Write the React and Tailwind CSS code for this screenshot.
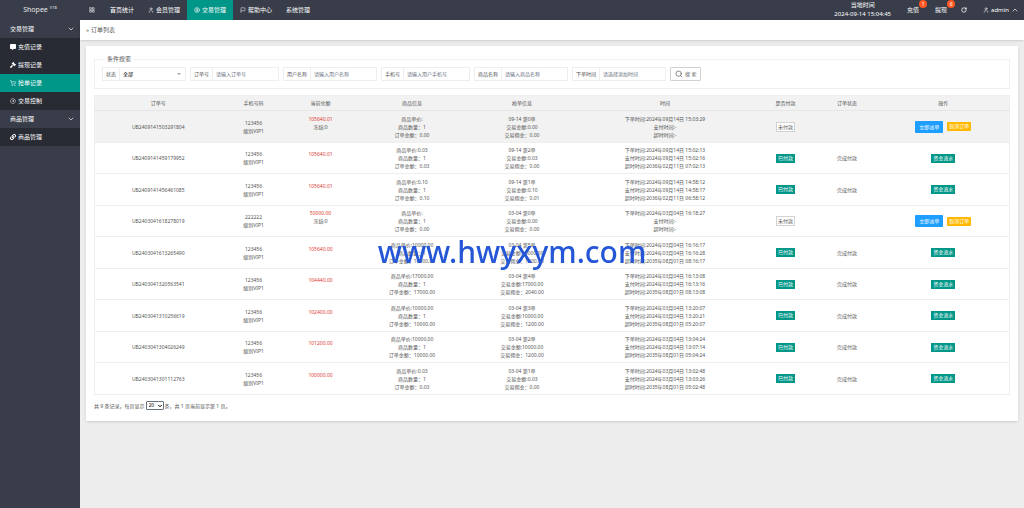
import React, { useState } from "react";
import {
  User,
  Flag,
  CircleDollarSign,
  LayoutGrid,
  ChevronDown,
  ChevronUp,
  RotateCw,
  Search,
  ShoppingCart,
  CircleGauge,
} from "lucide-react";
import { FaGavel, FaLink, FaCommentAlt } from "react-icons/fa";

const menu = [
  {
    title: "交易管理",
    children: [
      { label: "充值记录", icon: FaCommentAlt },
      { label: "提现记录", icon: FaGavel },
      { label: "抢单记录", icon: ShoppingCart, active: true },
      { label: "交易控制", icon: CircleGauge },
    ],
  },
  {
    title: "商品管理",
    children: [{ label: "商品管理", icon: FaLink }],
  },
];

const topNav = [
  { label: "首页统计" },
  { label: "会员管理", icon: User },
  { label: "交易管理", icon: CircleDollarSign, active: true },
  { label: "帮助中心", icon: Flag },
  { label: "系统管理" },
];

const filters = [
  { id: "order", label: "订单号", placeholder: "请输入订单号" },
  { id: "user", label: "用户名称", placeholder: "请输入用户名称" },
  { id: "phone", label: "手机号", placeholder: "请输入用户手机号" },
  { id: "goods", label: "商品名称", placeholder: "请输入商品名称" },
  { id: "time", label: "下单时间", placeholder: "请选择添加时间" },
];

const columns = [
  { title: "订单号", width: "w-[127px]" },
  { title: "手机号码", width: "w-[64px]" },
  { title: "当前余额", width: "w-[70px]" },
  { title: "商品信息", width: "w-[113px]" },
  { title: "抢单信息", width: "w-[107px]" },
  { title: "时间", width: "w-[179px]" },
  { title: "是否付款", width: "w-[62px]" },
  { title: "订单状态", width: "w-[61px]" },
  { title: "操作", width: "w-[132px]" },
];

const orders = [
  { id: "UB2409141503291804", phone: "123456", balance: "105640.01", price: "", total: "0.00", round: "09-14 第0单", amount: "0.00", fee: "0.00", created: "2024年09月14日 15:03:29", paidAt: "-", expires: "-", paid: false },
  { id: "UB2409141459179952", phone: "123456", balance: "105640.01", price: "0.03", total: "0.03", round: "09-14 第2单", amount: "0.03", fee: "0.00", created: "2024年09月14日 15:02:13", paidAt: "2024年09月14日 15:02:16", expires: "2036年02月11日 07:02:13", paid: true },
  { id: "UB2409141456461085", phone: "123456", balance: "105640.01", price: "0.10", total: "0.10", round: "09-14 第1单", amount: "0.10", fee: "0.01", created: "2024年09月14日 14:58:12", paidAt: "2024年09月14日 14:58:17", expires: "2036年02月11日 06:58:12", paid: true },
  { id: "UB2403041618278019", phone: "222222", balance: "50000.00", price: "", total: "0.00", round: "03-04 第0单", amount: "0.00", fee: "0.00", created: "2024年03月04日 16:18:27", paidAt: "-", expires: "-", paid: false },
  { id: "UB2403041613265490", phone: "123456", balance: "105640.00", price: "10000.00", total: "10000.00", round: "03-04 第5单", amount: "10000.00", fee: "1200.00", created: "2024年03月04日 16:16:17", paidAt: "2024年03月04日 16:16:28", expires: "2035年08月01日 08:16:17", paid: true },
  { id: "UB2403041320563541", phone: "123456", balance: "104440.00", price: "17000.00", total: "17000.00", round: "03-04 第4单", amount: "17000.00", fee: "2040.00", created: "2024年03月04日 16:13:08", paidAt: "2024年03月04日 16:13:16", expires: "2035年08月01日 08:13:08", paid: true },
  { id: "UB2403041310256619", phone: "123456", balance: "102400.00", price: "10000.00", total: "10000.00", round: "03-04 第3单", amount: "10000.00", fee: "1200.00", created: "2024年03月04日 13:20:07", paidAt: "2024年03月04日 13:20:21", expires: "2035年08月01日 05:20:07", paid: true },
  { id: "UB2403041304026249", phone: "123456", balance: "101200.00", price: "10000.00", total: "10000.00", round: "03-04 第2单", amount: "10000.00", fee: "1200.00", created: "2024年03月04日 13:04:24", paidAt: "2024年03月04日 13:07:14", expires: "2035年08月01日 05:04:24", paid: true },
  { id: "UB2403041301112763", phone: "123456", balance: "100000.00", price: "0.03", total: "0.03", round: "03-04 第1单", amount: "0.03", fee: "0.00", created: "2024年03月04日 13:02:48", paidAt: "2024年03月04日 13:03:26", expires: "2035年08月01日 05:02:48", paid: true },
];

function Sidebar() {
  return (
    <aside className="w-20 shrink-0 bg-[#393d49] text-white">
      <h1 className="flex h-5 items-center justify-center gap-[2px] text-[7px] text-gray-200">
        Shopee <sup className="text-[4px]">V18</sup>
      </h1>
      <nav>
        {menu.map((group) => (
          <div key={group.title}>
            <button
              type="button"
              className="flex h-[18px] w-full items-center justify-between pl-[10px] pr-[5px]"
            >
              {group.title}
              <ChevronDown className="size-2" />
            </button>
            {group.children.map((item) => (
              <a
                key={item.label}
                href="#"
                className={`flex h-[18px] items-center gap-[2px] pl-[10px] ${
                  item.active ? "bg-[#009688]" : "bg-[#282b33]"
                }`}
              >
                <item.icon className="size-[6px]" />
                {item.label}
              </a>
            ))}
          </div>
        ))}
      </nav>
    </aside>
  );
}

function Counter({ label, count }) {
  return (
    <a href="#" className="relative flex h-5 w-7 items-center justify-center">
      {label}
      <span className="absolute right-0 top-0 flex size-2 items-center justify-center rounded-full bg-[#ff5722] text-[5px]">
        {count}
      </span>
    </a>
  );
}

function Header() {
  return (
    <header className="flex h-5 items-center bg-[#393d49] text-white">
      <button type="button" aria-label="菜单" className="flex h-5 w-[23px] items-center justify-center">
        <LayoutGrid className="size-[6px]" />
      </button>
      <nav className="flex">
        {topNav.map((item) => (
          <a
            key={item.label}
            href="#"
            className={`flex h-5 items-center gap-[2px] px-[7px] ${
              item.active ? "bg-[#009688]" : ""
            }`}
          >
            {item.icon && <item.icon className="size-[6px]" />}
            {item.label}
          </a>
        ))}
      </nav>
      <div className="ml-auto flex items-center">
        <div className="mr-2 text-center leading-[9px]">
          <p>当地时间</p>
          <p>2024-09-14 15:04:45</p>
        </div>
        <Counter label="充值" count="1" />
        <Counter label="提现" count="6" />
        <button type="button" aria-label="刷新" className="flex h-5 w-[18px] items-center justify-center">
          <RotateCw className="size-[6px]" strokeWidth={3} />
        </button>
        <button type="button" className="flex h-5 items-center gap-[2px] pl-[10px] pr-[5px]">
          <User className="size-[6px]" />
          admin
          <ChevronUp className="size-2" />
        </button>
      </div>
    </header>
  );
}

function SearchForm() {
  const [status, setStatus] = useState("all");

  return (
    <form onSubmit={(e) => e.preventDefault()}>
      <fieldset className="border border-[#f0f0f0] px-[7px] pb-[7px] pt-[3px]">
        <legend className="ml-[3px] px-[2px] text-[6px] leading-[10px]">条件搜索</legend>
        <div className="flex flex-wrap gap-1 text-[5px]">
          <div className="relative flex h-[14px] border border-[#eeeeee]">
            <label htmlFor="status" className="flex items-center border-r border-[#eeeeee] px-[3px]">
              状态
            </label>
            <select
              id="status"
              className="w-[65px] appearance-none bg-white px-[3px] text-black outline-none"
              value={status}
              onChange={(e) => setStatus(e.target.value)}
            >
              <option value="all">全部</option>
              <option value="paid">已付款</option>
              <option value="unpaid">未付款</option>
            </select>
            <span className="pointer-events-none absolute right-1 top-[5px] border-x-2 border-t-2 border-x-transparent border-t-gray-400" />
          </div>
          {filters.map((f) => (
            <div key={f.id} className="flex h-[14px] border border-[#eeeeee]">
              <label htmlFor={f.id} className="flex items-center border-r border-[#eeeeee] px-[3px]">
                {f.label}
              </label>
              <input
                id={f.id}
                type="text"
                placeholder={f.placeholder}
                className="w-[65px] px-[3px] outline-none placeholder:text-gray-500"
              />
            </div>
          ))}
          <button
            type="submit"
            className="flex h-[14px] items-center gap-[2px] rounded-[1px] border border-[#d2d2d2] px-1"
          >
            <Search className="size-2" strokeWidth={2} />
            搜 索
          </button>
        </div>
      </fieldset>
    </form>
  );
}

function OrderRow({ order, highlighted }) {
  return (
    <tr className={`odd:h-8 even:h-[31px] ${highlighted ? "bg-[#f2f2f2]" : ""}`}>
      <td>{order.id}</td>
      <td>
        {order.phone}
        <br />
        级别VIP1
      </td>
      <td>
        <p className="text-[#dd3a30]">{order.balance}</p>
        {!order.paid && <p>冻结:0</p>}
        <p className="h-2" />
      </td>
      <td>
        <p>商品单价:{order.price}</p>
        <p>商品数量：1</p>
        <p>订单金额：{order.total}</p>
      </td>
      <td>
        <p>{order.round}</p>
        <p>交易金额:{order.amount}</p>
        <p>交易佣金：{order.fee}</p>
      </td>
      <td>
        <p>下单时间:{order.created}</p>
        <p>支付时间:{order.paidAt}</p>
        <p>超时时间:{order.expires}</p>
      </td>
      <td>
        {order.paid ? (
          <span className="inline-block bg-[#009688] px-[2px] leading-[9px] text-white">已付款</span>
        ) : (
          <span className="inline-block border border-[#d2d2d2] bg-white px-[1px] leading-[8px]">未付款</span>
        )}
      </td>
      <td>{order.paid && "完成付款"}</td>
      <td>
        {order.paid ? (
          <button type="button" className="bg-[#009688] px-[2px] leading-[9px] text-white">
            资金流水
          </button>
        ) : (
          <div className="flex items-center justify-center gap-1">
            <button type="button" className="rounded-[1px] bg-[#1e9fff] px-1 leading-[12px] text-white">
              立即派单
            </button>
            <button type="button" className="rounded-[1px] bg-[#ffb800] px-[2px] leading-[9px] text-white">
              取消订单
            </button>
          </div>
        )}
      </td>
    </tr>
  );
}

function Pagination() {
  const [pageSize, setPageSize] = useState("20");

  return (
    <div className="mt-[6px] flex items-center gap-[1px] text-[5px] leading-[8px]">
      <label htmlFor="page-size">共 {orders.length} 条记录，每页显示</label>
      <span className="relative flex">
        <select
          id="page-size"
          className="h-[9px] w-[18px] appearance-none rounded-[1px] border border-gray-500 bg-white pl-[2px] leading-[7px] text-black"
          value={pageSize}
          onChange={(e) => setPageSize(e.target.value)}
        >
          <option value="20">20</option>
          <option value="50">50</option>
        </select>
        <ChevronDown className="pointer-events-none absolute right-[1px] top-[2px] size-[6px] text-black" strokeWidth={4} />
      </span>
      <span>条，共 1 页当前显示第 1 页。</span>
    </div>
  );
}

export default function App() {
  return (
    <div className="flex min-h-screen bg-[#ededed] font-['Noto_Sans','Noto_Sans_CJK_SC',sans-serif] text-[6px] leading-[10px] text-[#555555]">
      <Sidebar />
      <div className="min-w-0 flex-1">
        <Header />
        <div className="flex h-5 items-center gap-[2px] bg-white pl-[6px] shadow-sm">
          <span>»</span>
          <h2>订单列表</h2>
        </div>
        <main className="m-[6px] bg-white px-2 pb-[11px] pt-2 shadow-sm">
          <SearchForm />
          <table className="mt-[6px] w-full table-fixed border-collapse border border-[#eeeeee] text-center text-[5px] leading-[8px] [&_td]:border-b [&_td]:border-[#eeeeee]">
            <thead>
              <tr className="h-[15px] border-b border-[#e6e6e6] bg-[#f2f2f2]">
                {columns.map((col) => (
                  <th key={col.title} className={`font-normal ${col.width}`}>
                    {col.title}
                  </th>
                ))}
              </tr>
            </thead>
            <tbody>
              {orders.map((order, i) => (
                <OrderRow key={order.id} order={order} highlighted={i === 0} />
              ))}
            </tbody>
          </table>
          <Pagination />
        </main>
      </div>

      {/* Site watermark */}
      <div className="pointer-events-none fixed inset-0 flex items-center justify-center pb-1 text-[30px] font-medium leading-none text-[#2456d6]">
        www.hwyxym.com
      </div>
    </div>
  );
}
